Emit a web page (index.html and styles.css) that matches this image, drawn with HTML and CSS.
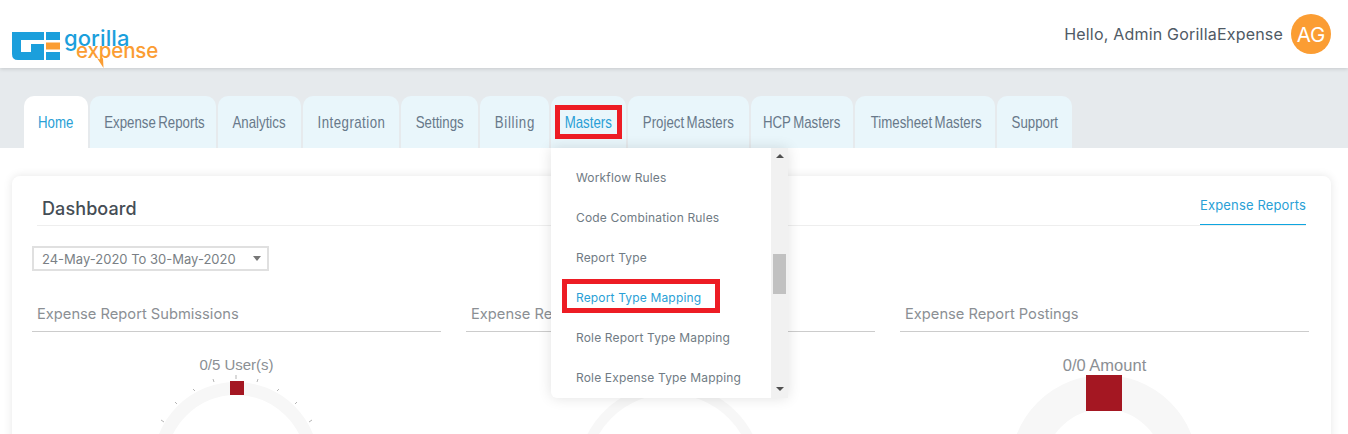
FILE: index.html
```html
<!DOCTYPE html>
<html lang="en">
<head>
<meta charset="utf-8">
<title>Gorilla Expense Dashboard</title>
<link rel="stylesheet" href="styles.css">
</head>
<body>
<header class="topbar">
  <div class="logo">
    <svg class="logo-mark" width="48" height="28" viewBox="0 0 48 28">
      <path fill="#1b9fdc" d="M0 0H32V8H9V20H19V12H32V28H6Q0 28 0 22Z"/>
      <path fill="#1b9fdc" d="M34 0H48V8H34ZM34 20H48V28H34Z"/>
      <path fill="#fb9d33" d="M34 10.500H48V17.500H34Z"/>
    </svg>
    <div class="logo-words">
      <span class="logo-gorilla">gorilla</span>
      <span class="logo-expense">expense</span>
      <svg class="logo-spark" width="8" height="10" viewBox="0 0 8 10"><path fill="#fb9d33" d="M0 0L3 1.500L6 0L6.500 10Z"/></svg>
    </div>
  </div>
  <div class="user">
    <span class="user-name">Hello, Admin GorillaExpense</span>
    <span class="avatar">AG</span>
  </div>
</header>

<nav class="tabband">
  <ul class="tabs">
    <li class="tab tab-active w-home"><span class="tab-label">Home</span></li>
    <li class="tab w-exp"><span class="tab-label">Expense Reports</span></li>
    <li class="tab w-ana"><span class="tab-label">Analytics</span></li>
    <li class="tab w-int"><span class="tab-label">Integration</span></li>
    <li class="tab w-set"><span class="tab-label">Settings</span></li>
    <li class="tab w-bil"><span class="tab-label">Billing</span></li>
    <li class="tab tab-open w-mas"><span class="tab-label">Masters</span>
      <span class="mark mark-tab"></span>
      <div class="dropdown">
        <ul class="menu">
          <li>Workflow Rules</li>
          <li>Code Combination Rules</li>
          <li>Report Type</li>
          <li class="menu-current">Report Type Mapping<span class="mark mark-item"></span></li>
          <li>Role Report Type Mapping</li>
          <li>Role Expense Type Mapping</li>
        </ul>
        <div class="scrollbar">
          <span class="arrow arrow-up"></span>
          <span class="thumb"></span>
          <span class="arrow arrow-down"></span>
        </div>
      </div>
    </li>
    <li class="tab w-pro"><span class="tab-label">Project Masters</span></li>
    <li class="tab w-hcp"><span class="tab-label">HCP Masters</span></li>
    <li class="tab w-tim"><span class="tab-label">Timesheet Masters</span></li>
    <li class="tab w-sup"><span class="tab-label">Support</span></li>
  </ul>
</nav>

<main class="content">
  <section class="card">
    <div class="card-head">
      <h1 class="card-title">Dashboard</h1>
      <span class="card-link">Expense Reports</span>
    </div>
    <div class="range">
      <span>24-May-2020 To 30-May-2020</span>
      <span class="range-caret"></span>
    </div>
    <div class="charts">
      <article class="chart">
        <h2 class="chart-title">Expense Report Submissions</h2>
        <p class="chart-value">0/5 User(s)</p>
        <svg class="gauge" width="409" height="60" viewBox="0 0 409 60">
          <circle cx="204" cy="91" r="76.500" fill="none" stroke="#f7f7f7" stroke-width="13"/>
          <path stroke="#b5b5b5" stroke-width="1" fill="none" d="M204 1V5M181 5L182 8M161 15L163 17M143 28L145 30M129 46L132 48M226 5L225 8M247 15L245 17M265 28L263 30M280 46L277 48"/>
          <rect x="198" y="7" width="14" height="14" fill="#a41722"/>
        </svg>
      </article>
      <article class="chart">
        <h2 class="chart-title">Expense Report Approvals</h2>
        <p class="chart-value chart-amount">0/0 Amount</p>
        <svg class="gauge" width="409" height="60" viewBox="0 0 409 60">
          <circle cx="204" cy="103" r="88" fill="none" stroke="#f7f7f7" stroke-width="10"/>
        </svg>
      </article>
      <article class="chart">
        <h2 class="chart-title">Expense Report Postings</h2>
        <p class="chart-value chart-amount">0/0 Amount</p>
        <svg class="gauge" width="409" height="60" viewBox="0 0 409 60">
          <circle cx="204" cy="95" r="77" fill="none" stroke="#f7f7f7" stroke-width="34"/>
          <rect x="186" y="1" width="36" height="36" fill="#a41722"/>
        </svg>
      </article>
    </div>
  </section>
</main>
</body>
</html>
```
FILE: styles.css
```css
* { box-sizing: border-box; }
html, body { margin: 0; height: 434px; overflow: hidden; background: #fff; }
body { font-family: "Inter", "Open Sans", sans-serif; color: #555; }
ul { list-style: none; margin: 0; padding: 0; }
h1, h2, p { margin: 0; font-weight: 400; }

.topbar {
  height: 68px; display: flex; justify-content: space-between; align-items: flex-start;
  padding: 14px 17px 0 12px; background: #fff; position: relative; z-index: 2;
  box-shadow: 0 1px 4px rgba(0,0,0,.14);
}
.logo { display: flex; margin-top: 18px; }
.logo-mark { display: block; }
.logo-words { position: relative; width: 100px; height: 36px; }
.logo-gorilla { position: absolute; left: 4px; top: -6px; font: 500 22px/24px "Inter", sans-serif; color: #1b9fdc; letter-spacing: .1px; }
.logo-expense { position: absolute; left: 16px; top: 7px; font: 500 20.500px/24px "Inter", sans-serif; color: #fb9d33; letter-spacing: -.15px; }
.logo-spark { position: absolute; left: 37px; top: 26px; }
.user { display: flex; align-items: center; gap: 8px; }
.user-name { font-size: 16px; letter-spacing: .2px; color: #4f5a65; }
.avatar {
  width: 40px; height: 40px; border-radius: 50%; background: #fb9d33; color: #fff;
  display: flex; align-items: center; justify-content: center; font-size: 20.500px;
}

.tabband { height: 80px; background: #e6eaed; padding: 28px 0 0 24px; }
.tabs { display: flex; gap: 2px; }
.tab {
  height: 52px; text-align: center; background: #e9f6fb; color: #68798a; white-space: nowrap;
  border-radius: 10px 10px 0 0; position: relative;
  font: 17px/53px "Liberation Sans", "Roboto", sans-serif;
}
.tab-label { display: inline-block; transform: scaleX(.78); transform-origin: center; word-spacing: -1.500px; }
.tab-active { background: #fff; color: #2a9fd6; }
.tab-open { color: #2a9fd6; }
.w-home { width: 64px; } .w-exp { width: 126px; } .w-ana { width: 83px; } .w-int { width: 96px; letter-spacing: .6px; }
.w-set { width: 77px; } .w-bil { width: 69px; letter-spacing: .9px; } .w-mas { width: 75px; } .w-pro { width: 121px; }
.w-hcp { width: 102px; } .w-tim { width: 140px; } .w-sup { width: 75px; }

.mark { position: absolute; border: 5px solid #ed1c24; pointer-events: none; }
.mark-tab { left: 4px; top: 9px; width: 67px; height: 34px; }
.mark-item { left: 11px; top: 1px; width: 158px; height: 34px; }

.dropdown {
  position: absolute; left: 0; top: 100%; width: 237px; height: 250px; z-index: 5; display: flex;
  background: #fff; border-radius: 0 0 0 6px; text-align: left;
  box-shadow: 0 0 14px rgba(0,0,0,.12);
}
.menu { width: 220px; padding-top: 10px; font: 12px/40px "Inter", sans-serif; letter-spacing: .16px; color: #707b84; }
.menu li { height: 40px; padding-left: 25px; position: relative; }
.menu .menu-current { color: #2a9fd6; }
.scrollbar { width: 17px; background: #f1f1f1; position: relative; }
.thumb { position: absolute; left: 2px; top: 106px; width: 13px; height: 40px; background: #c1c1c1; }
.arrow { position: absolute; left: 5px; width: 0; height: 0; border-left: 4px solid transparent; border-right: 4px solid transparent; }
.arrow-up { top: 6px; border-bottom: 4px solid #505050; }
.arrow-down { bottom: 7px; border-top: 4px solid #505050; }

.content { padding: 28px 17px 0 12px; height: 286px; overflow: hidden; }
.card {
  background: #fff; border-radius: 8px; height: 300px; padding: 0 22px 0 20px;
  box-shadow: 0 0 10px rgba(0,0,0,.1);
}
.card-head {
  margin-left: 5px; margin-right: 3px; height: 50px; display: flex; justify-content: space-between;
  border-bottom: 1px solid #eee;
}
.card-title { font-size: 18px; letter-spacing: .1px; font-weight: 500; color: #454d55; padding: 22px 0 0 5px; line-height: 22px; }
.card-link {
  font-size: 13px; letter-spacing: .13px; color: #2a9fd6; width: 106px; line-height: 20px; padding-top: 19px;
  border-bottom: 1px solid #0ea5e0; text-align: center; height: 49px; white-space: nowrap;
}
.range {
  margin-top: 20px; width: 237px; height: 25px; border: 2px solid #e0e0e0; display: flex; align-items: center;
  justify-content: space-between; padding: 0 6px 0 8px; font-size: 13px; color: #7a7f85;
}
.range-caret { border-left: 4.500px solid transparent; border-right: 4.500px solid transparent; border-top: 5px solid #777; }
.charts { display: grid; grid-template-columns: repeat(3, 409px); column-gap: 25px; margin-top: 26px; }
.chart-title { font-size: 14.700px; line-height: 34px; height: 35px; padding-left: 5px; color: #8b8f94; border-bottom: 1px solid #ccc; }
.chart-value { margin-top: 22px; height: 20px; text-align: center; font: 15px/22px "Liberation Sans", sans-serif; color: #8b8f94; }
.chart-amount { font-size: 16.500px; }
.gauge { display: block; }
```
